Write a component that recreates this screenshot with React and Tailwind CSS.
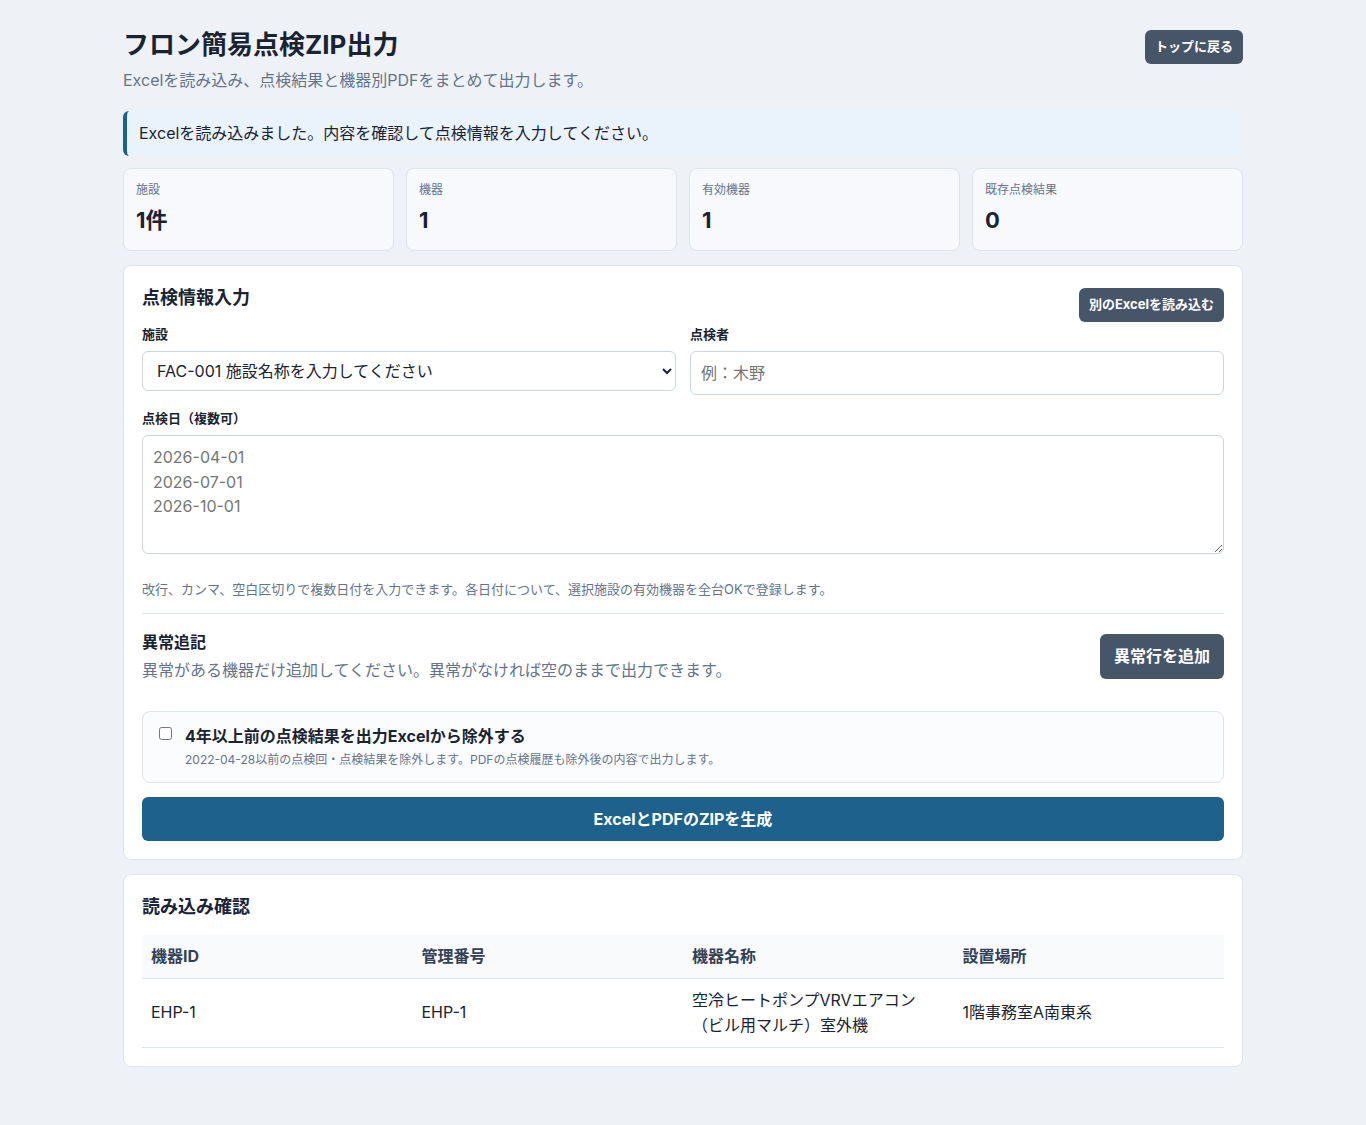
const STATS = [
  { label: "施設", value: "1件" },
  { label: "機器", value: "1" },
  { label: "有効機器", value: "1" },
  { label: "既存点検結果", value: "0" },
];

const FONT = "font-['Inter','Noto_Sans_CJK_JP',sans-serif]";

export default function App() {
  return (
    <div className={`min-h-[1125px] bg-[#eef2f7] text-[#1a2332] ${FONT}`}>
      <div className="mx-auto w-[1120px] pt-[25px] pb-[58px]">
        {/* Header */}
        <div className="flex items-start justify-between">
          <div>
            <h1 className="text-[26px] leading-[40px] font-bold">フロン簡易点検ZIP出力</h1>
            <p className="mt-[3px] text-[16px] leading-[24px] text-[#64748b]">
              Excelを読み込み、点検結果と機器別PDFをまとめて出力します。
            </p>
          </div>
          <button className="mt-[5px] h-[34px] rounded-[6px] bg-[#475569] px-[10px] text-[13px] font-bold text-white">
            トップに戻る
          </button>
        </div>

        {/* Alert */}
        <div className="mt-[19px] h-[45px] rounded-[6px] border-l-[4px] border-[#1f618d] bg-[#eaf2fb] pl-[12px] text-[16px] leading-[44px]">
          Excelを読み込みました。内容を確認して点検情報を入力してください。
        </div>

        {/* Stats */}
        <div className="mt-[12px] grid grid-cols-4 gap-[12px]">
          {STATS.map((s) => (
            <div key={s.label} className="h-[83px] rounded-[8px] border border-[#dde4ee] bg-[#f7f9fc] px-[12px] pt-[12px]">
              <p className="text-[12px] leading-[18px] text-[#64748b]">{s.label}</p>
              <p className="mt-[5px] text-[22px] leading-[32px] font-bold">{s.value}</p>
            </div>
          ))}
        </div>

        {/* Input panel */}
        <div className="mt-[14px] rounded-[8px] border border-[#dde4ee] bg-white p-[18px]">
          <div className="flex items-start justify-between">
            <h2 className="mt-[1px] text-[18px] leading-[26px] font-bold">点検情報入力</h2>
            <button className="mt-[4px] h-[34px] rounded-[6px] bg-[#475569] px-[10px] text-[13px] font-bold text-white">
              別のExcelを読み込む
            </button>
          </div>

          <div className="mt-[3px] grid grid-cols-2 gap-[14px]">
            <div>
              <label className="block text-[13px] leading-[18px] font-bold">施設</label>
              <select className="mt-[8px] h-[40px] w-full rounded-[6px] border border-[#cbd5e1] bg-white px-[10px] text-[16px]">
                <option>FAC-001 施設名称を入力してください</option>
              </select>
            </div>
            <div>
              <label className="block text-[13px] leading-[18px] font-bold">点検者</label>
              <input
                className="mt-[8px] h-[44px] w-full rounded-[6px] border border-[#cbd5e1] px-[10px] text-[16px] placeholder:text-[#757575]"
                placeholder="例：木野"
              />
            </div>
          </div>

          <label className="mt-[14px] block text-[13px] leading-[18px] font-bold">点検日（複数可）</label>
          <textarea
            className="mt-[8px] block h-[119px] w-full rounded-[6px] border border-[#cbd5e1] px-[10px] py-[9px] text-[16px] leading-[24.5px] placeholder:text-[#757575]"
            placeholder={"2026-04-01\n2026-07-01\n2026-10-01"}
          />
          <p className="mt-[26px] text-[13px] leading-[18px] text-[#64748b]">
            改行、カンマ、空白区切りで複数日付を入力できます。各日付について、選択施設の有効機器を全台OKで登録します。
          </p>

          <div className="mt-[15px] border-t border-[#dde4ee]" />

          {/* Anomaly notes */}
          <div className="mt-[20px] flex items-start justify-between">
            <div>
              <h3 className="-mt-[2px] text-[16px] leading-[20px] font-bold">異常追記</h3>
              <p className="mt-[6px] text-[16px] leading-[24px] text-[#64748b]">
                異常がある機器だけ追加してください。異常がなければ空のままで出力できます。
              </p>
            </div>
            <button className="h-[45px] rounded-[6px] bg-[#475569] px-[14px] pb-[1px] text-[16px] font-bold text-white">
              異常行を追加
            </button>
          </div>

          {/* Exclude option */}
          <label className="mt-[29px] flex h-[72px] items-start gap-[13px] rounded-[8px] border border-[#dde4ee] bg-[#fbfcfe] pl-[16px] pt-[14px]">
            <input type="checkbox" className="mt-[1px] h-[13px] w-[13px]" />
            <span>
              <span className="block text-[16px] leading-[20px] font-bold">4年以上前の点検結果を出力Excelから除外する</span>
              <span className="mt-[5px] block text-[12px] leading-[18px] text-[#64748b]">
                2022-04-28以前の点検回・点検結果を除外します。PDFの点検履歴も除外後の内容で出力します。
              </span>
            </span>
          </label>

          <button className="mt-[14px] h-[44px] w-full rounded-[6px] bg-[#1f618d] pb-[1px] text-[16px] font-bold text-white">
            ExcelとPDFのZIPを生成
          </button>
        </div>

        {/* Preview table */}
        <div className="mt-[14px] rounded-[8px] border border-[#dde4ee] bg-white px-[18px] pt-[19px] pb-[18px]">
          <h2 className="text-[18px] leading-[26px] font-bold">読み込み確認</h2>
          <table className="mt-[15px] w-full table-fixed text-[16px]">
            <thead>
              <tr className="h-[43px] border-b border-[#dde4ee] bg-[#f8fafc] text-left text-[#334155]">
                <th className="px-[9px] font-bold">機器ID</th>
                <th className="px-[9px] font-bold">管理番号</th>
                <th className="px-[9px] font-bold">機器名称</th>
                <th className="px-[9px] font-bold">設置場所</th>
              </tr>
            </thead>
            <tbody>
              <tr className="h-[69px] border-b border-[#dde4ee] leading-[25px]">
                <td className="px-[9px]">EHP-1</td>
                <td className="px-[9px]">EHP-1</td>
                <td className="px-[9px]">空冷ヒートポンプVRVエアコン（ビル用マルチ）室外機</td>
                <td className="px-[9px]">1階事務室A南東系</td>
              </tr>
            </tbody>
          </table>
        </div>
      </div>
    </div>
  );
}
